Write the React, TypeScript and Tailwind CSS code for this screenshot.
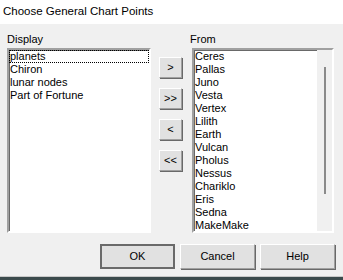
import React from "react";

const displayItems = ["planets", "Chiron", "lunar nodes", "Part of Fortune"];
const fromItems = [
  "Ceres",
  "Pallas",
  "Juno",
  "Vesta",
  "Vertex",
  "Lilith",
  "Earth",
  "Vulcan",
  "Pholus",
  "Nessus",
  "Chariklo",
  "Eris",
  "Sedna",
  "MakeMake",
];

function MoveButton({ label }: { label: string }) {
  return (
    <button className="w-[23px] h-[21px] bg-[#e1e1e1] border border-t-white border-l-white border-r-[#a0a0a0] border-b-[#a0a0a0] shadow-[1px_1px_0_#696969] text-[11px] leading-[11px] text-black flex items-center justify-center">
      {label}
    </button>
  );
}

function DialogButton({ label, primary }: { label: string; primary?: boolean }) {
  return (
    <button
      className={
        "w-[75px] h-[25px] bg-[#e1e1e1] text-[11px] text-black flex items-center justify-center " +
        (primary
          ? "border-2 border-[#6a6a6a]"
          : "border border-t-white border-l-white border-r-[#a0a0a0] border-b-[#a0a0a0] shadow-[1px_1px_0_#696969]")
      }
    >
      {label}
    </button>
  );
}

export default function App() {
  return (
    <div
      className="w-[343px] h-[280px] bg-[#f0f0f0] overflow-hidden flex flex-col text-black"
      style={{ fontFamily: '"Liberation Sans", Arial, sans-serif' }}
    >
      {/* title bar */}
      <div className="h-[24px] bg-white pl-[3px] pt-[3px] text-[11.5px] leading-[16px]">
        Choose General Chart Points
      </div>

      <div className="flex pt-[9px] pl-[7px]">
        {/* Display column */}
        <div className="flex flex-col w-[144px]">
          <div className="text-[11px] leading-[13px] h-[13px] mb-[2px]">Display</div>
          <div className="h-[185px] bg-white border-2 border-t-[#a0a0a0] border-l-[#a0a0a0] border-r-white border-b-white shadow-[inset_1px_1px_0_#696969]">
            {displayItems.map((item, i) => (
              <div
                key={item}
                className={
                  "text-[11px] leading-[13px] h-[13px] pl-[1px] " +
                  (i === 0 ? "outline-1 outline-dotted outline-black -outline-offset-1" : "")
                }
              >
                {item}
              </div>
            ))}
          </div>
        </div>

        {/* move buttons */}
        <div className="flex flex-col gap-[10px] ml-[8px] mt-[24px] w-[23px]">
          <MoveButton label=">" />
          <MoveButton label=">>" />
          <MoveButton label="<" />
          <MoveButton label="<<" />
        </div>

        {/* From column */}
        <div className="flex flex-col ml-[8px] w-[144px]">
          <div className="text-[11px] leading-[13px] h-[13px] mb-[2px]">From</div>
          <div className="ml-[2px] w-[142px] h-[185px] bg-white border-2 border-t-[#a0a0a0] border-l-[#a0a0a0] border-r-white border-b-white shadow-[inset_1px_1px_0_#696969] flex">
            <div className="flex-1">
              {fromItems.map((item) => (
                <div key={item} className="text-[11px] leading-[13px] h-[13px] pl-[1px]">
                  {item}
                </div>
              ))}
            </div>
            <div className="w-[15px] bg-[#f0f0f0] pt-[17px] flex justify-center">
              <div className="w-[2px] h-[127px] bg-[#8a8a8a]" />
            </div>
          </div>
        </div>
      </div>

      {/* bottom buttons */}
      <div className="flex gap-[5px] pl-[100px] mt-[11px]">
        <DialogButton label="OK" primary />
        <DialogButton label="Cancel" />
        <DialogButton label="Help" />
      </div>

      <div className="mt-auto h-[4px] bg-[#3b4a4c] border-t border-[#c8c8c8]" />
    </div>
  );
}
